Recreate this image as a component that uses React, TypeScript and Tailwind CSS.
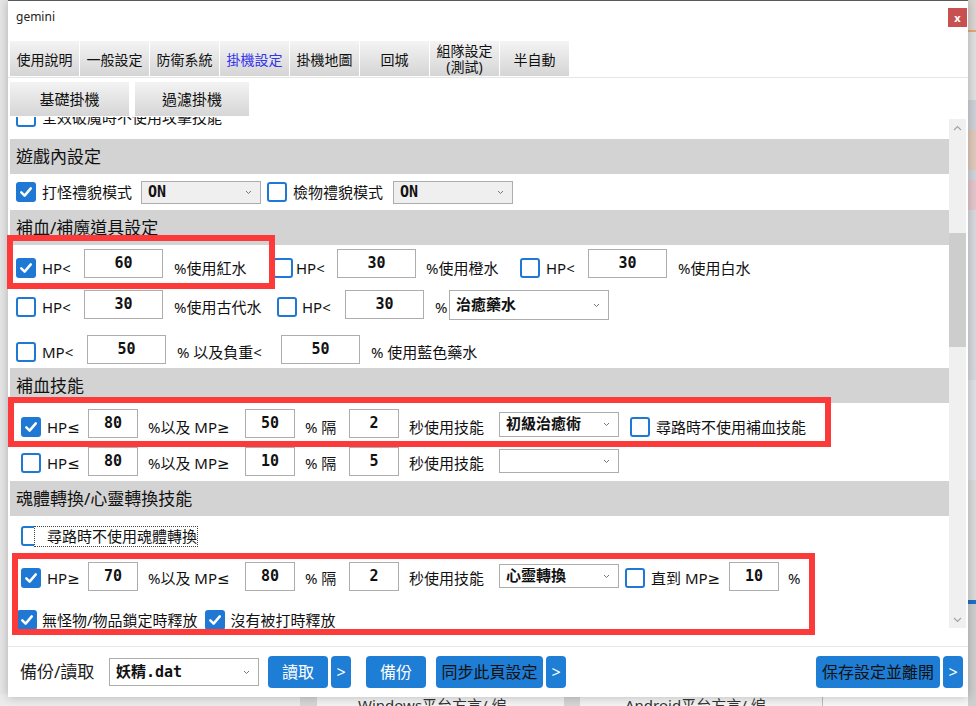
import React from "react";

const SANS = "font-['Noto_Sans','DejaVu_Sans','Noto_Sans_CJK_TC',sans-serif]";
const MONO = "font-['DejaVu_Sans_Mono','Noto_Sans_CJK_TC',monospace]";

function Check({ on = false, cls = "" }: { on?: boolean; cls?: string }) {
  if (on) {
    return (
      <span className={`flex h-[20px] w-[20px] shrink-0 items-center justify-center rounded-[3px] bg-[#1f78d3] ${cls}`}>
        <svg width="14" height="14" viewBox="0 0 14 14">
          <path d="M2.3 7.4 L5.6 10.6 L11.8 3.4" stroke="white" strokeWidth="2.5" fill="none" strokeLinecap="round" strokeLinejoin="round" />
        </svg>
      </span>
    );
  }
  return <span className={`h-[20px] w-[20px] shrink-0 rounded-[3px] border-2 border-[#1f78d3] bg-white ${cls}`} />;
}

function Txt({ children, cls = "" }: { children: React.ReactNode; cls?: string }) {
  return <span className={`shrink-0 whitespace-nowrap text-[15px] leading-[20px] text-[#111] ${cls}`}>{children}</span>;
}

function Num({ v, cls = "" }: { v: string; cls?: string }) {
  return (
    <span className={`flex h-[29px] shrink-0 items-center justify-center border border-[#adadad] bg-white ${MONO} text-[15px] font-bold text-[#111] ${cls}`}>
      {v}
    </span>
  );
}

function Drop({ v = "", cls = "" }: { v?: string; cls?: string }) {
  return (
    <span className={`flex shrink-0 items-center border border-[#adadad] pl-[6px] pr-[8px] ${MONO} text-[15px] font-bold text-[#111] ${cls}`}>
      <span className="flex-1 whitespace-nowrap">{v}</span>
      <svg width="7" height="5" viewBox="0 0 7 5">
        <path d="M1 1 L3.5 3.5 L6 1" stroke="#777" strokeWidth="1" fill="none" />
      </svg>
    </span>
  );
}

function Band({ t }: { t: string }) {
  return <div className="flex h-[35px] shrink-0 items-center bg-[#d3d3d3] pl-[6px] text-[17px] text-[#111]">{t}</div>;
}

function Btn({ t, dark = false, cls = "" }: { t: string; dark?: boolean; cls?: string }) {
  return (
    <span className={`flex h-[32px] shrink-0 items-center justify-center rounded-[4px] bg-[#1e7dd5] text-[16px] ${dark ? "text-[#111]" : "text-white"} ${cls}`}>
      {t}
    </span>
  );
}

const tabs = ["使用說明", "一般設定", "防衛系統", "掛機設定", "掛機地圖", "回城", "組隊設定", "半自動"];

export default function App() {
  return (
    <div className={`relative h-[706px] w-[976px] overflow-hidden bg-[#e7e7e7] ${SANS}`}>
      {/* page behind the dialog, right edge */}
      <div className="absolute right-0 top-0 flex h-full w-[8px] flex-col">
        <div className="h-[30px] bg-[#ddd6d3]" />
        <div className="h-[2px] bg-[#e9a77a]" />
        <div className="h-[68px] bg-[#e2e2e2]" />
        <div className="h-[30px] bg-[#cfd2d8]" />
        <div className="h-[40px] bg-[#e2cbbd]" />
        <div className="h-[10px] bg-[#d2d6dc]" />
        <div className="h-[30px] bg-[#e5c8cd]" />
        <div className="h-[170px] bg-[#d9dadf]" />
        <div className="h-[100px] bg-[#e1e2e7]" />
        <div className="h-[120px] bg-[#dcdcdc]" />
        <div className="h-[4px] bg-[#1f73c8]" />
        <div className="flex-1 bg-[#cfcfcf]" />
      </div>

      {/* page behind the dialog, bottom edge */}
      <div className="absolute bottom-0 left-0 flex h-[12px] w-[968px] text-[15px] leading-[22px] text-[#333]">
        <div className="w-[300px] bg-[#ececec]" />
        <div className="w-[17px] bg-[#d6d6d6]" />
        <div className="w-[247px] overflow-hidden bg-[#f3f3f3] pl-[41px]">
          <span className="whitespace-nowrap">Windows平台方言/ 编</span>
        </div>
        <div className="w-[16px] bg-[#d6d6d6]" />
        <div className="w-[242px] overflow-hidden bg-[#f3f3f3] pl-[45px]">
          <span className="whitespace-nowrap">Android平台方言/ 编</span>
        </div>
        <div className="flex-1 border-l border-[#bbb] bg-[#f7f7f7]" />
      </div>

      {/* dialog */}
      <div className="absolute left-[8px] top-0 flex h-[697px] w-[960px] flex-col border-t border-[#5a5a5a] bg-white shadow-[0_0_10px_rgba(0,0,0,0.25)]">
        {/* title bar */}
        <div className="flex h-[40px] shrink-0 items-start justify-between">
          <span className="pl-[8px] pt-[7px] text-[12px] leading-[18px] text-[#222]">gemini</span>
          <span className="mr-[1px] mt-[7px] flex h-[19px] w-[19px] items-center justify-center bg-[#c75150] text-[11px] font-bold leading-none text-white">
            x
          </span>
        </div>

        {/* tabs */}
        <div className="flex h-[35px] shrink-0 gap-[1px] pl-[2px]">
          {tabs.map((t, i) => (
            <div
              key={t}
              className={`flex w-[69px] flex-col items-center justify-center bg-gradient-to-b from-[#f4f4f4] to-[#d5d5d5] text-[14px] ${
                i === 6 ? "leading-[16px] pt-[1px]" : "leading-[18px] pt-[3px]"
              } ${i === 3 ? "text-[#3434ee]" : "text-[#111]"}`}
            >
              <span>{t}</span>
              {i === 6 && <span>(測試)</span>}
            </div>
          ))}
        </div>
        <div className="mt-[1px] h-[1px] shrink-0 bg-[#e6e6e6]" />

        {/* sub buttons */}
        <div className="mt-[4px] flex h-[34px] shrink-0 gap-[6px] pl-[2px]">
          <span className="flex w-[119px] items-center justify-center bg-gradient-to-b from-[#f3f3f3] to-[#d6d6d6] text-[15px] text-[#111]">
            基礎掛機
          </span>
          <span className="flex w-[114px] items-center justify-center bg-gradient-to-b from-[#f3f3f3] to-[#d6d6d6] text-[15px] text-[#111]">
            過濾掛機
          </span>
        </div>

        {/* scroll area */}
        <div className="mt-[1px] flex h-[512px] shrink-0">
          <div className="w-[941px] overflow-hidden pl-[2px]">
            <div className="-mt-[22px] flex flex-col">
              {/* partly scrolled out */}
              <div className="flex h-[44px] items-center">
                <Check cls="ml-[6px]" />
                <Txt cls="ml-[6px]">全效破魔時不使用攻擊技能</Txt>
              </div>

              <Band t="遊戲內設定" />
              <div className="flex h-[36px] items-center">
                <Check on cls="ml-[6px]" />
                <Txt cls="ml-[6px] w-[90px]">打怪禮貌模式</Txt>
                <Drop v="ON" cls="ml-[9px] h-[23px] w-[120px] bg-[#efefef]" />
                <Check cls="ml-[6px]" />
                <Txt cls="ml-[6px] w-[90px]">檢物禮貌模式</Txt>
                <Drop v="ON" cls="ml-[10px] h-[23px] w-[120px] bg-[#efefef]" />
              </div>

              <Band t="補血/補魔道具設定" />
              <div className="flex h-[46px] items-center">
                <Check on cls="ml-[6px]" />
                <Txt cls="ml-[6px] w-[42px]">HP&lt;</Txt>
                <Num v="60" cls="mb-[9px] w-[79px]" />
                <Txt cls="ml-[11px] w-[99px]">%使用紅水</Txt>
                <Check />
                <Txt cls="ml-[3px] w-[41px]">HP&lt;</Txt>
                <Num v="30" cls="mb-[9px] w-[79px]" />
                <Txt cls="ml-[10px] w-[94px]">%使用橙水</Txt>
                <Check />
                <Txt cls="ml-[6px] w-[42px]">HP&lt;</Txt>
                <Num v="30" cls="mb-[9px] w-[79px]" />
                <Txt cls="ml-[11px]">%使用白水</Txt>
              </div>
              <div className="flex h-[45px] items-center pb-[13px]">
                <Check cls="ml-[6px]" />
                <Txt cls="ml-[6px] w-[42px]">HP&lt;</Txt>
                <Num v="30" cls="mb-[5px] w-[79px]" />
                <Txt cls="ml-[11px] w-[103px]">%使用古代水</Txt>
                <Check />
                <Txt cls="ml-[5px] w-[43px]">HP&lt;</Txt>
                <Num v="30" cls="mb-[5px] w-[79px]" />
                <Txt cls="ml-[11px] w-[14px]">%</Txt>
                <Drop v="治癒藥水" cls="mb-[4px] h-[30px] w-[160px] bg-white" />
              </div>
              <div className="flex h-[32px] items-center">
                <Check cls="ml-[6px]" />
                <Txt cls="ml-[6px] w-[45px]">MP&lt;</Txt>
                <Num v="50" cls="mb-[5px] w-[79px]" />
                <Txt cls="ml-[11px] w-[104px]">% 以及負重&lt;</Txt>
                <Num v="50" cls="mb-[5px] w-[79px]" />
                <Txt cls="ml-[11px]">% 使用藍色藥水</Txt>
              </div>

              <Band t="補血技能" />
              <div className="flex h-[42px] items-center pt-[6px]">
                <Check on cls="ml-[11px]" />
                <Txt cls="ml-[6px] w-[41px]">HP≤</Txt>
                <Num v="80" cls="mb-[7px] w-[50px]" />
                <Txt cls="ml-[10px] w-[97px]">%以及 MP≥</Txt>
                <Num v="50" cls="mb-[7px] w-[50px]" />
                <Txt cls="ml-[10px] w-[44px]">% 隔</Txt>
                <Num v="2" cls="mb-[7px] w-[50px]" />
                <Txt cls="ml-[10px] w-[90px]">秒使用技能</Txt>
                <Drop v="初級治癒術" cls="mb-[6px] h-[25px] w-[120px] bg-white" />
                <Check cls="ml-[11px]" />
                <Txt cls="ml-[6px]">尋路時不使用補血技能</Txt>
              </div>
              <div className="flex h-[36px] items-center">
                <Check cls="ml-[11px]" />
                <Txt cls="ml-[6px] w-[41px]">HP≤</Txt>
                <Num v="80" cls="mb-[3px] w-[50px]" />
                <Txt cls="ml-[10px] w-[97px]">%以及 MP≥</Txt>
                <Num v="10" cls="mb-[3px] w-[50px]" />
                <Txt cls="ml-[10px] w-[44px]">% 隔</Txt>
                <Num v="5" cls="mb-[3px] w-[50px]" />
                <Txt cls="ml-[10px] w-[90px]">秒使用技能</Txt>
                <Drop cls="mb-[4px] h-[24px] w-[120px] bg-white" />
              </div>

              <Band t="魂體轉換/心靈轉換技能" />
              <div className="flex h-[40px] items-center">
                <Check cls="ml-[11px]" />
                <span className="relative -ml-[7px] flex h-[21px] items-center border border-dotted border-[#444] bg-white pl-[12px] text-[15px] text-[#111]">
                  尋路時不使用魂體轉換
                </span>
              </div>
              <div className="flex h-[44px] items-center">
                <Check on cls="ml-[11px]" />
                <Txt cls="ml-[6px] w-[41px]">HP≥</Txt>
                <Num v="70" cls="mb-[4px] w-[50px]" />
                <Txt cls="ml-[10px] w-[97px]">%以及 MP≤</Txt>
                <Num v="80" cls="mb-[4px] w-[50px]" />
                <Txt cls="ml-[10px] w-[44px]">% 隔</Txt>
                <Num v="2" cls="mb-[4px] w-[50px]" />
                <Txt cls="ml-[10px] w-[90px]">秒使用技能</Txt>
                <Drop v="心靈轉換" cls="mb-[4px] h-[24px] w-[120px] bg-white" />
                <Check cls="ml-[6px]" />
                <Txt cls="ml-[6px] w-[78px]">直到 MP≥</Txt>
                <Num v="10" cls="mb-[4px] w-[50px]" />
                <Txt cls="ml-[9px]">%</Txt>
              </div>
              <div className="flex h-[40px] items-center">
                <Check on cls="ml-[7px]" />
                <Txt cls="ml-[5px]">無怪物/物品鎖定時釋放</Txt>
                <Check on cls="ml-[7px]" />
                <Txt cls="ml-[6px]">沒有被打時釋放</Txt>
              </div>
            </div>
          </div>

          {/* scrollbar */}
          <div className="mt-[2px] flex h-[509px] w-[17px] flex-col bg-[#f0f0f0]">
            <div className="flex h-[17px] items-center justify-center">
              <svg width="9" height="6" viewBox="0 0 9 6">
                <path d="M1 5 L4.5 1.5 L8 5" stroke="#a3a3a3" strokeWidth="1.2" fill="none" />
              </svg>
            </div>
            <div className="mt-[97px] h-[114px] bg-[#cdcdcd]" />
            <div className="mt-auto flex h-[17px] items-center justify-center">
              <svg width="9" height="6" viewBox="0 0 9 6">
                <path d="M1 1 L4.5 4.5 L8 1" stroke="#a3a3a3" strokeWidth="1.2" fill="none" />
              </svg>
            </div>
          </div>
        </div>

        <div className="mt-[17px] h-[1px] shrink-0 bg-[#e6e6e6]" />

        {/* footer */}
        <div className="flex h-[50px] shrink-0 items-center pl-[12px] pr-[5px]">
          <span className="w-[89px] shrink-0 whitespace-nowrap text-[17px] text-[#222]">備份/讀取</span>
          <Drop v="妖精.dat" cls="h-[28px] w-[150px] bg-white" />
          <Btn t="讀取" cls="ml-[9px] w-[60px]" />
          <Btn t=">" cls="ml-[3px] w-[20px] text-[13px]" />
          <Btn t="備份" cls="ml-[15px] w-[60px]" />
          <Btn t="同步此頁設定" dark cls="ml-[10px] w-[107px]" />
          <Btn t=">" cls="ml-[3px] w-[20px] text-[13px]" />
          <div className="flex-1" />
          <Btn t="保存設定並離開" dark cls="w-[124px]" />
          <Btn t=">" cls="ml-[3px] w-[20px] text-[13px]" />
        </div>
      </div>

      {/* red annotation frames */}
      <div className="absolute left-[7px] top-[235px] h-[54px] w-[268px] border-[6px] border-[#fc3a3a]" />
      <div className="absolute left-[8px] top-[397px] h-[50px] w-[823px] border-[6px] border-[#fc3a3a]" />
      <div className="absolute left-[12px] top-[553px] h-[82px] w-[803px] border-[6px] border-[#fc3a3a]" />
    </div>
  );
}
